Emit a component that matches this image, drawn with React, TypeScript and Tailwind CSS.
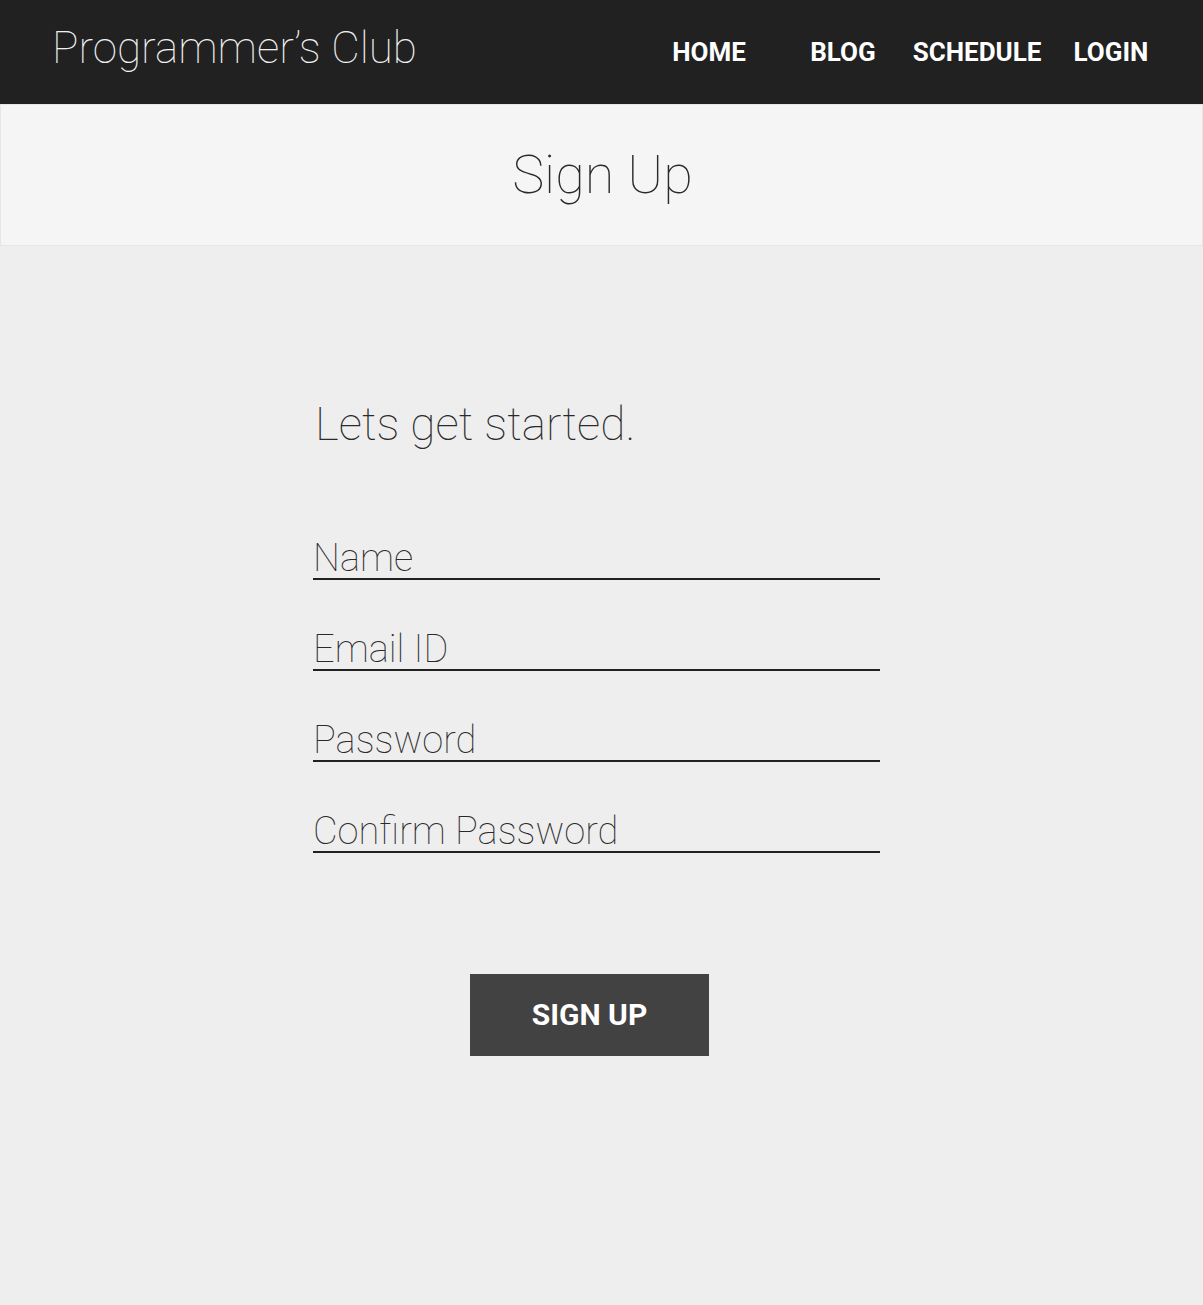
import React from 'react';

const navItems = ['HOME', 'BLOG', 'SCHEDULE', 'LOGIN'];
const fields = ['Name', 'Email ID', 'Password', 'Confirm Password'];

const App: React.FC = () => {
  return (
    <div className="min-h-[1305px] flex flex-col bg-[#eeeeee] font-['Roboto',sans-serif]">
      {/* top bar */}
      <header className="h-[104px] bg-[#212121] flex items-center justify-between pl-[52px] pr-[25px]">
        <h1 className="text-[44px] font-thin text-[#f2f2f2] leading-none -mt-[8px]">Programmer’s Club</h1>
        <nav className="flex">
          {navItems.map((item) => (
            <a key={item} href="#" className="w-[134px] text-center text-[26px] font-bold text-white leading-none">
              {item}
            </a>
          ))}
        </nav>
      </header>

      {/* title band */}
      <div className="h-[142px] bg-[#f5f5f5] border border-[#e6e6e6] flex items-center justify-center">
        <h2 className="text-[54px] font-thin text-[#2a2a2a] leading-none -mt-[1px] pl-[2px]">Sign Up</h2>
      </div>

      <main className="flex-grow">
        <form className="ml-[313px] w-[567px] pt-[155px]" onSubmit={(e) => e.preventDefault()}>
          <p className="text-[46px] font-thin text-[#2a2a2a] leading-none pl-[2px]">Lets get started.</p>
          <div className="mt-[85px] flex flex-col gap-[43px]">
            {fields.map((f) => (
              <input
                key={f}
                type={f.includes('Password') ? 'password' : 'text'}
                placeholder={f}
                className="h-[48px] w-full bg-transparent border-b-2 border-[#212121] text-[38px] font-thin text-[#2a2a2a] placeholder:text-[#2a2a2a] outline-none leading-none pt-[6px]"
              />
            ))}
          </div>
          <button
            type="submit"
            className="mt-[121px] ml-[157px] w-[239px] h-[82px] bg-[#424242] text-white text-[30px] font-bold leading-none"
          >
            SIGN UP
          </button>
        </form>
      </main>
    </div>
  );
};

export default App;
